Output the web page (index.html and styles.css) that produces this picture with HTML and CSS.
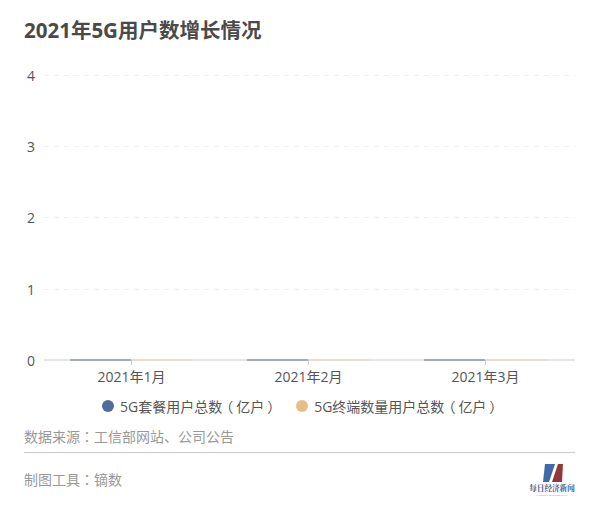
FILE: index.html
```html
<!DOCTYPE html>
<html lang="zh-CN">
<head>
<meta charset="utf-8">
<title>2021年5G用户数增长情况</title>
<link rel="stylesheet" href="styles.css">
</head>
<body>
<main class="card">
  <h1 class="title">2021年5G用户数增长情况</h1>
  <svg class="chart" width="600" height="326" viewBox="0 60 600 326" role="img">
    <g class="grid">
      <line x1="44" x2="575" y1="75.5" y2="75.5"/>
      <line x1="44" x2="575" y1="146.5" y2="146.5"/>
      <line x1="44" x2="575" y1="217.5" y2="217.5"/>
      <line x1="44" x2="575" y1="289.5" y2="289.5"/>
    </g>
    <g class="ylabels">
      <text x="27" y="81">4</text>
      <text x="27" y="152">3</text>
      <text x="27" y="223">2</text>
      <text x="27" y="295">1</text>
      <text x="27" y="366">0</text>
    </g>
    <line class="axis" x1="44" x2="575" y1="360" y2="360"/>
    <g class="ticks">
      <line x1="131.5" x2="131.5" y1="360" y2="365"/>
      <line x1="308.5" x2="308.5" y1="360" y2="365"/>
      <line x1="485.5" x2="485.5" y1="360" y2="365"/>
    </g>
    <g class="bars-blue">
      <rect x="70" y="359" width="61" height="2"/>
      <rect x="247" y="359" width="61" height="2"/>
      <rect x="424" y="359" width="61" height="2"/>
    </g>
    <g class="bars-orange">
      <rect x="132" y="359" width="61" height="2"/>
      <rect x="309" y="359" width="61" height="2"/>
      <rect x="486" y="359" width="61" height="2"/>
    </g>
    <g class="xlabels">
      <text x="131.5" y="382">2021年1月</text>
      <text x="308.5" y="382">2021年2月</text>
      <text x="485.5" y="382">2021年3月</text>
    </g>
  </svg>
  <ul class="legend">
    <li class="legend-item"><span class="dot dot-blue"></span><span class="legend-text">5G套餐用户总数<span class="paren">（</span>亿户<span class="paren">）</span></span></li>
    <li class="legend-item"><span class="dot dot-orange"></span><span class="legend-text">5G终端数量用户总数<span class="paren">（</span>亿户<span class="paren">）</span></span></li>
  </ul>
  <p class="source">数据来源<span class="punct" lang="zh-TW">：</span>工信部网站、公司公告</p>
  <footer class="footer">
    <span class="tool">制图工具<span class="punct" lang="zh-TW">：</span>镝数</span>
    <div class="logo">
      <svg class="logo-mark" width="22" height="19" viewBox="0 0 22 19">
        <polygon class="mark-blue" points="2,0 12,0 8,12 6,18 0,18"/>
        <polygon class="mark-red" points="15,0 20,0 19,18 9,18"/>
      </svg>
      <span class="logo-cn">每日经济新闻</span>
      <span class="logo-en">NATIONAL BUSINESS DAILY</span>
    </div>
  </footer>
</main>
</body>
</html>
```
FILE: styles.css
```css
* { box-sizing: border-box; }
html, body { margin: 0; padding: 0; background: #fff; }
body { font-family: "Open Sans", "Noto Sans CJK SC", sans-serif; }
.card { width: 600px; height: 510px; overflow: hidden; padding: 0 25px 0 24px; color: #666; }
.title { margin: 0; padding-top: 16px; height: 60px; font-size: 20.5px; line-height: 28px; font-weight: 700; color: #4a4a4a; white-space: nowrap; }
.chart { display: block; margin-left: -24px; }
.chart text { font-family: "Open Sans", "Noto Sans CJK SC", sans-serif; font-size: 14px; fill: #555; }
.grid line { stroke: #eef0f2; stroke-width: 1; stroke-dasharray: 5 5; }
.axis { stroke: #ccc; stroke-width: 1; }
.ticks line { stroke: #ccc; stroke-width: 1; }
.bars-blue rect { fill: #a3aaba; }
.bars-orange rect { fill: #eaddd0; }
.xlabels text { text-anchor: middle; }
.legend { list-style: none; margin: 0; padding: 0 0 0 78px; display: flex; gap: 18px; height: 40px; align-items: center; }
.legend-item { display: flex; align-items: center; gap: 6px; font-size: 14px; color: #555; white-space: nowrap; }
.paren { display: inline-block; width: 14px; text-align: center; font-feature-settings: "palt"; }
.punct { font-family: "Noto Sans CJK TC", sans-serif; }
.dot { width: 12px; height: 12px; border-radius: 50%; flex: none; }
.dot-blue { background: #4e6c9c; }
.dot-orange { background: #e8bd85; }
.source { margin: 0; height: 27px; padding-top: 0; border-bottom: 1px solid #ccc; font-size: 14px; line-height: 20px; color: #999; }
.footer { display: flex; justify-content: space-between; align-items: flex-start; padding-top: 16px; }
.tool { font-size: 14px; line-height: 20px; color: #999; }
.logo { display: flex; flex-direction: column; align-items: center; width: 46px; margin-top: -5px; }
.logo-mark { display: block; margin-left: 3px; }
.mark-blue { fill: #3f69a8; }
.mark-red { fill: #8f3a3a; }
.logo-cn { font-family: "Noto Serif CJK SC", "Noto Sans CJK SC", serif; font-size: 7.6px; line-height: 10px; font-weight: 700; color: #3a5a8a; white-space: nowrap; }
.logo-en { font-size: 2.5px; line-height: 4px; color: #8a97ad; white-space: nowrap; }
```
